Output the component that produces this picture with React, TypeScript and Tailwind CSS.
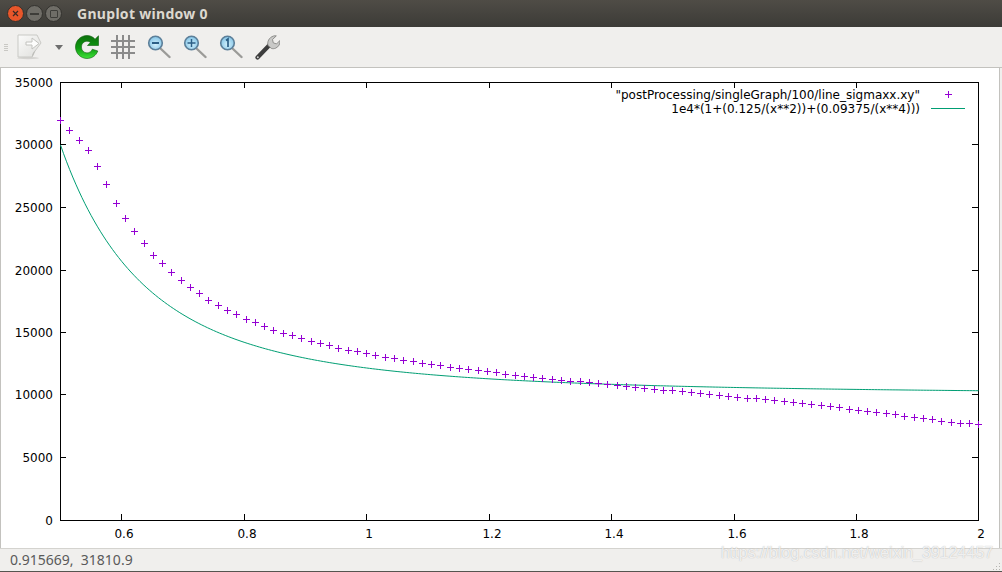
import type { ReactNode } from "react";

const markers: [number, number][] = [
  [60, 120], [69, 130], [79, 140], [88, 150], [97, 166], [106, 184], [116, 203], [125, 218], [134, 231], [144, 243],
  [153, 255], [162, 263], [171, 272], [181, 280], [190, 287], [199, 293], [208, 300], [218, 305], [227, 310], [236, 314],
  [246, 319], [255, 322], [264, 326], [273, 330], [283, 333], [292, 335], [301, 338], [311, 341], [320, 343], [329, 345],
  [338, 348], [348, 350], [357, 351], [366, 353], [375, 355], [385, 357], [394, 358], [403, 360], [413, 361], [422, 363],
  [431, 364], [440, 365], [450, 367], [459, 368], [468, 369], [478, 370], [487, 371], [496, 372], [505, 374], [515, 375],
  [524, 376], [533, 377], [542, 378], [552, 379], [561, 380], [570, 381], [580, 381], [589, 382], [598, 383], [607, 384],
  [617, 385], [626, 386], [635, 387], [644, 388], [654, 389], [663, 390], [672, 390], [682, 391], [691, 392], [700, 393],
  [709, 394], [719, 395], [728, 396], [737, 397], [747, 398], [756, 398], [765, 399], [774, 400], [784, 401], [793, 402],
  [802, 403], [811, 404], [821, 405], [830, 406], [839, 407], [849, 409], [858, 410], [867, 411], [876, 412], [886, 413],
  [895, 414], [904, 416], [914, 417], [923, 418], [932, 419], [941, 421], [951, 422], [960, 423], [969, 423], [978, 424],
];

const xTicks = [
  { px: 121, label: "0.6" },
  { px: 244, label: "0.8" },
  { px: 366, label: "1" },
  { px: 489, label: "1.2" },
  { px: 611, label: "1.4" },
  { px: 734, label: "1.6" },
  { px: 856, label: "1.8" },
];

const yTicks = [
  { px: 82, label: "35000" },
  { px: 144, label: "30000" },
  { px: 207, label: "25000" },
  { px: 270, label: "20000" },
  { px: 332, label: "15000" },
  { px: 394, label: "10000" },
  { px: 457, label: "5000" },
  { px: 520, label: "0" },
];

function curvePoints() {
  const pts: string[] = [];
  for (let i = 0; i <= 300; i++) {
    const x = 0.5 + (1.5 * i) / 300;
    const val = 1e4 * (1 + 0.125 / (x * x) + 0.09375 / (x * x * x * x));
    pts.push((60.5 + (x - 0.5) * 612).toFixed(2) + "," + (520.5 - (val / 35000) * 438).toFixed(2));
  }
  return pts.join(" ");
}

function Cross({ x, y }: { x: number; y: number }) {
  return (
    <path
      d={"M" + (x - 3) + " " + (y + 0.5) + "h7M" + (x + 0.5) + " " + (y - 3) + "v7"}
      stroke="#9400d3"
      fill="none"
      shapeRendering="crispEdges"
    />
  );
}

function Plot() {
  return (
    <svg viewBox="1 68 998 480" className="block w-[998px] h-[480px] font-['DejaVu_Sans',sans-serif] text-[12px]">
      {/* frame and ticks */}
      <g stroke="#000" fill="none" shapeRendering="crispEdges">
        <rect x="60.5" y="82.5" width="918" height="438" />
        {xTicks.map((t) => (
          <path key={t.label} d={"M" + (t.px + 0.5) + " 82v6M" + (t.px + 0.5) + " 520v-6"} />
        ))}
        {yTicks.slice(1, 7).map((t) => (
          <path key={t.label} d={"M60 " + (t.px + 0.5) + "h6M978 " + (t.px + 0.5) + "h-6"} />
        ))}
      </g>

      {yTicks.map((t) => (
        <text key={t.label} x="53" y={t.px + 4.5} textAnchor="end" fill="#000">
          {t.label}
        </text>
      ))}
      {xTicks.map((t) => (
        <text key={t.label} x={t.px + 3} y="538" textAnchor="middle" fill="#000">
          {t.label}
        </text>
      ))}
      <text x="981" y="538" textAnchor="middle" fill="#000">2</text>

      {/* legend */}
      <text x="920" y="98.5" textAnchor="end" fill="#000">"postProcessing/singleGraph/100/line_sigmaxx.xy"</text>
      <text x="920" y="112.5" textAnchor="end" fill="#000">1e4*(1+(0.125/(x**2))+(0.09375/(x**4)))</text>
      <Cross x={948} y={94} />
      <path d="M931 108.5h34" stroke="#009e73" shapeRendering="crispEdges" />

      <polyline points={curvePoints()} fill="none" stroke="#009e73" strokeWidth="1" />
      {markers.map(([x, y]) => (
        <Cross key={x} x={x} y={y} />
      ))}
    </svg>
  );
}

function WindowButton({ color, children }: { color: string; children: ReactNode }) {
  return (
    <div className={"flex h-[17px] w-[17px] items-center justify-center rounded-full border border-[#33322e] " + color}>
      {children}
    </div>
  );
}

function DocIcon() {
  return (
    <svg width="25" height="26" viewBox="0 0 25 26">
      <defs>
        <linearGradient id="docFill" x1="0" y1="0" x2="1" y2="1">
          <stop offset="0" stopColor="#fbfbfa" />
          <stop offset="1" stopColor="#dededb" />
        </linearGradient>
      </defs>
      <ellipse cx="11" cy="24" rx="11" ry="1.2" fill="#d4d3d0" />
      <path d="M1 1h19l4 8-6 8-3 6H1z" fill="url(#docFill)" stroke="#c9c9c5" />
      <path d="M15 23c0-4 2-6 4-7l-1 1c-1 2-1 4-3 6z" fill="#bdbdb9" />
      <path d="M9 8h6V4l7 5.500-7 5.500v-4H9z" fill="#fdfdfc" stroke="#c2c2be" />
    </svg>
  );
}

function ReloadIcon() {
  return (
    <svg width="24" height="26" viewBox="0 0 24 26">
      <defs>
        <linearGradient id="reloadFill" x1="0" y1="0" x2="0" y2="1">
          <stop offset="0" stopColor="#0c6f0c" />
          <stop offset="0.55" stopColor="#0e9a10" />
          <stop offset="1" stopColor="#3fe23a" />
        </linearGradient>
      </defs>
      <path
        d="M12 1.500C5.600 1.500 .5 6.700 .5 13S5.600 24.500 12 24.500c5 0 9.200-3 10.800-7.500l-5.500-1.800c-.8 2.200-2.900 3.700-5.300 3.700-3.100 0-5.600-2.500-5.600-5.900S8.900 7.200 12 7.200c1.300 0 2.500.4 3.400 1.200L12.500 11.500H23.500V1.800L20 5.200C18 2.800 15.200 1.500 12 1.500z"
        fill="url(#reloadFill)"
        stroke="#0b5e0b"
        strokeWidth=".6"
      />
    </svg>
  );
}

function GridIcon() {
  return (
    <svg width="24" height="24" viewBox="0 0 24 24" fill="none" stroke="#8b8b8b" strokeWidth="2" shapeRendering="crispEdges">
      <path d="M6 0v24M12 0v24M18 0v24M0 6h24M0 12h24M0 18h24" />
    </svg>
  );
}

function ZoomIcon({ id, children }: { id: string; children: ReactNode }) {
  return (
    <svg width="24" height="24" viewBox="0 0 24 24">
      <defs>
        <radialGradient id={id} cx="0.5" cy="0.6" r="0.6">
          <stop offset="0" stopColor="#d4f0fb" />
          <stop offset="1" stopColor="#7fc2e6" />
        </radialGradient>
      </defs>
      <path d="M13.500 13.500L22.500 22" stroke="#9b9b98" strokeWidth="2.400" strokeLinecap="round" />
      <circle cx="8.500" cy="8" r="6.800" fill={"url(#" + id + ")"} stroke="#5c7f99" strokeWidth="1.600" />
      {children}
    </svg>
  );
}

function WrenchIcon() {
  return (
    <svg width="25" height="26" viewBox="0 0 25 26">
      <path d="M2.500 23.500L15 10.500" stroke="#3d3d3d" strokeWidth="4.200" strokeLinecap="round" />
      <circle cx="2.800" cy="23.200" r="1" fill="#cfcfcf" />
      <path
        d="M13 11.500c-1-3.500.8-8 5.500-9.500 1-.3 2-.3 2.800-.1l-3.800 3.600.8 3.400 3.300 1 3.400-3.500c.4 3.500-1.400 6.500-4.400 7.800-1.500.6-3 .6-4.200.2z"
        fill="#c9c9c7"
        stroke="#7c7c7a"
        strokeWidth=".8"
      />
    </svg>
  );
}

export default function App() {
  return (
    <div className="relative flex h-[572px] w-[1002px] flex-col overflow-hidden bg-[#f0efed] font-['Noto_Sans',sans-serif]">
      {/* title bar */}
      <div className="flex h-[27px] items-center bg-gradient-to-b from-[#4f4c46] to-[#3c3b37] pl-[7px]">
        <div className="flex gap-[2px]">
          <WindowButton color="bg-[#e8562a]">
            <svg width="7" height="7" viewBox="0 0 7 7" stroke="#3a2a24" strokeWidth="1.200">
              <path d="M1 1l5 5M6 1L1 6" />
            </svg>
          </WindowButton>
          <WindowButton color="bg-[#6f6d67]">
            <div className="h-[2px] w-[9px] bg-[#3e3d39]" />
          </WindowButton>
          <WindowButton color="bg-[#6f6d67]">
            <div className="h-[8px] w-[8px] rounded-[1px] border border-[#3e3d39]" />
          </WindowButton>
        </div>
        <span className="ml-[15px] text-[14px] font-bold leading-none tracking-[0.3px] text-[#dcd8cf]">Gnuplot window 0</span>
      </div>

      {/* toolbar */}
      <div className="flex h-[41px] items-center border-b border-[#c3c2be] pl-[4px]">
        <div className="mr-[9px] flex flex-col gap-[1px]">
          <div className="h-[1px] w-[4px] bg-[#c9c8c4]" />
          <div className="h-[1px] w-[4px] bg-[#c9c8c4]" />
          <div className="h-[1px] w-[4px] bg-[#c9c8c4]" />
          <div className="h-[1px] w-[4px] bg-[#c9c8c4]" />
        </div>
        <DocIcon />
        <div className="ml-[13px] mr-[12px] h-0 w-0 border-x-[4px] border-t-[5px] border-x-transparent border-t-[#6e6e6e]" />
        <ReloadIcon />
        <div className="ml-[12px]"><GridIcon /></div>
        <div className="ml-[12px]">
          <ZoomIcon id="zoomOut">
            <path d="M5 8h7" stroke="#2c5f86" strokeWidth="2" />
          </ZoomIcon>
        </div>
        <div className="ml-[12px]">
          <ZoomIcon id="zoomIn">
            <path d="M4.500 8h8M8.500 4v8" stroke="#2c5f86" strokeWidth="1.500" />
          </ZoomIcon>
        </div>
        <div className="ml-[12px]">
          <ZoomIcon id="zoomFit">
            <path d="M7 5.500l2-1.500v8" stroke="#2c5f86" strokeWidth="1.700" fill="none" />
          </ZoomIcon>
        </div>
        <div className="ml-[12px]"><WrenchIcon /></div>
      </div>

      {/* plot */}
      <div className="flex h-[480px] border-l border-[#c3c2be] bg-white">
        <Plot />
        <div className="w-[3px] border-l border-[#c3c2be] bg-[#f0efed]" />
      </div>

      {/* status bar */}
      <div className="flex flex-1 items-center border-t border-[#d4d3cf] border-b border-b-[#55544f] pl-[10px] text-[14px] leading-none text-[#5a5a5a] whitespace-pre">
        0.915669,  31810.9
      </div>

      {/* resize grip */}
      <div className="absolute bottom-[2px] right-[2px] grid grid-cols-3 gap-[2px]">
        {[0, 1, 2, 3, 4, 5, 6, 7, 8].map((i) => (
          <div key={i} className={i === 0 || i === 1 || i === 3 ? "h-[1px] w-[1px]" : "h-[1px] w-[1px] bg-[#b5b4b0]"} />
        ))}
      </div>

      {/* watermark */}
      <div className="absolute left-[721px] top-[544px] font-['Liberation_Sans',sans-serif] text-[16px] leading-[18px] text-white/80 [text-shadow:0_0_1px_rgba(120,120,120,0.6)] whitespace-nowrap">
        https://blog.csdn.net/weixin_39124457
      </div>
    </div>
  );
}
